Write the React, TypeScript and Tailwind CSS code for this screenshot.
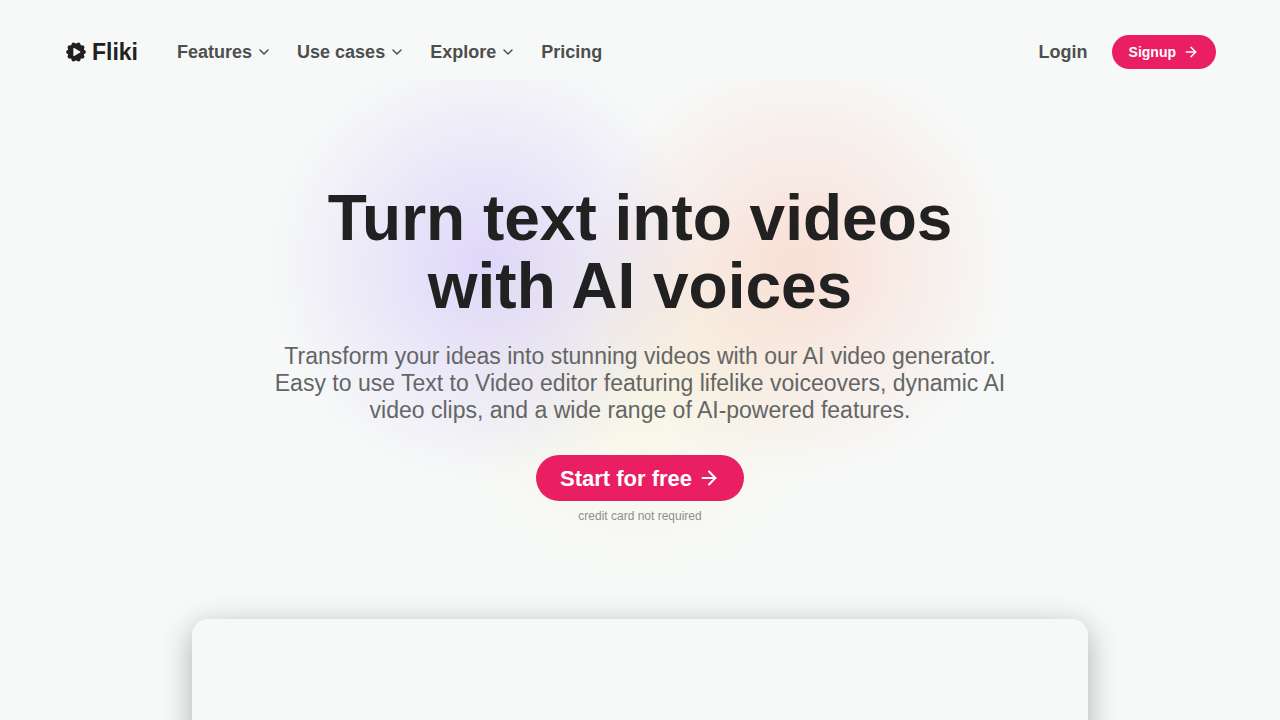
import { ArrowRight, ChevronDown } from "lucide-react";

const menus = ["Features", "Use cases", "Explore"];

function Logo() {
  const lobes = Array.from({ length: 10 }, (_, i) => {
    const a = ((i * 36 - 72) * Math.PI) / 180;
    return { x: 12 + 9.4 * Math.cos(a), y: 12 + 9.4 * Math.sin(a) };
  });
  return (
    <svg viewBox="0 0 24 24" className="size-5" aria-hidden="true" fill="#212121">
      <circle cx="12" cy="12" r="10.1" />
      {lobes.map((p, i) => (
        <circle key={i} cx={p.x} cy={p.y} r="2.5" />
      ))}
      <path d="M9.5 7.9v8.2l7.1-4.1z" fill="#f7f9f8" stroke="#f7f9f8" strokeWidth="1.3" strokeLinejoin="round" />
    </svg>
  );
}

function Header() {
  return (
    <header className="flex h-20 items-center justify-between px-16 pt-6">
      <div className="flex items-center">
        <a href="#" className="mr-[39px] flex items-center gap-1.5 pl-0.5 text-[23px] leading-8 font-bold text-[#212121]">
          <Logo />
          Fliki
        </a>
        <nav className="flex items-center gap-[25px] text-lg font-bold text-[#4d4f4e]">
          {menus.map((m) => (
            <button key={m} type="button" className="flex items-center gap-1">
              {m}
              <ChevronDown className="size-4" strokeWidth={2.2} />
            </button>
          ))}
          <a href="#pricing">Pricing</a>
        </nav>
      </div>
      <div className="flex items-center gap-6">
        <a href="#login" className="text-lg font-bold text-[#4d4f4e]">
          Login
        </a>
        <a
          href="#signup"
          className="flex h-[34px] items-center gap-[7px] rounded-full bg-[#e91e63] px-[17px] text-sm font-bold text-white"
        >
          Signup
          <ArrowRight className="size-4" strokeWidth={2.2} />
        </a>
      </div>
    </header>
  );
}

export default function App() {
  return (
    <div className="h-screen overflow-hidden bg-[#f7f9f8] font-['Liberation_Sans',Arial,sans-serif]">
      <Header />
      <main className="bg-[radial-gradient(circle_at_calc(50%-155px)_185px,rgba(116,66,255,0.19),transparent_218px),radial-gradient(circle_at_calc(50%+160px)_185px,rgba(255,87,34,0.16),transparent_212px),radial-gradient(circle_at_50%_305px,rgba(255,225,70,0.11),rgba(255,225,70,0.04)_115px,transparent_205px)] px-8 pt-[104px]">
        <section className="mx-auto flex max-w-3xl flex-col items-center text-center">
          <h1 className="text-[64px] leading-[68px] font-bold text-[#212121]">
            Turn text into videos
            <br />
            with AI voices
          </h1>
          <p className="mt-[23px] text-[23px] leading-[27px] text-[#646665]">
            Transform your ideas into stunning videos with our AI video generator.
            <br />
            Easy to use Text to Video editor featuring lifelike voiceovers, dynamic AI
            <br />
            video clips, and a wide range of AI-powered features.
          </p>
          <a
            href="#start"
            className="mt-[31px] flex h-[46px] items-center gap-1.5 rounded-full bg-[#e91e63] px-6 text-[22px] font-bold text-white"
          >
            Start for free
            <ArrowRight className="size-[22px]" strokeWidth={2.2} />
          </a>
          <p className="mt-2 text-xs leading-[14px] text-[#8d8f8e]">credit card not required</p>
        </section>
        <div className="mx-auto mt-24 aspect-video max-w-4xl rounded-2xl bg-[#f7f9f8] shadow-[0_8px_30px_rgba(0,0,0,0.3)]" />
      </main>
    </div>
  );
}
